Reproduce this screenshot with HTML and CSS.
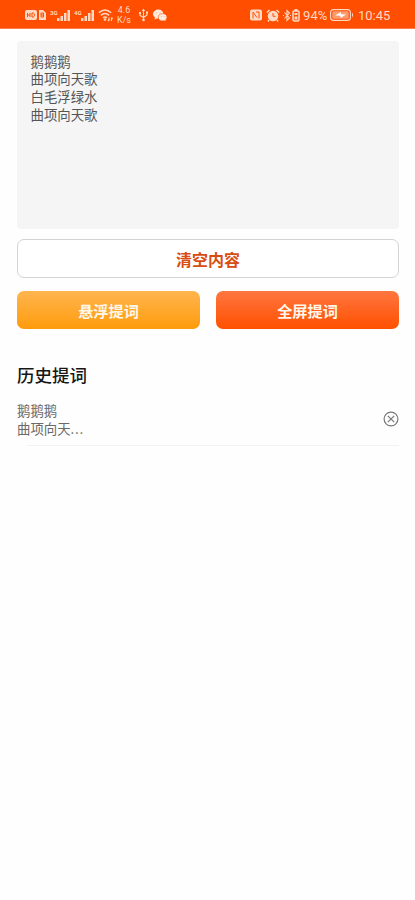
FILE: index.html
```html
<!DOCTYPE html>
<html lang="zh-CN">
<head>
<meta charset="utf-8">
<meta name="viewport" content="width=device-width, initial-scale=1">
<title>提词</title>
<link rel="stylesheet" href="styles.css">
</head>
<body>
<header class="status">
  <div class="status-left">
    <svg class="icon sim" width="21" height="12" viewBox="0 0 21 12"><rect y="1" width="12" height="10" rx="2" fill="currentColor"/><path class="cut" d="M2.500 4v4M5 4v4M2.500 6H5M7 4v4h1c2 0 2-4 0-4z"/><path d="M14 1h4l3 3v7h-7z" fill="currentColor"/><path class="cut" d="M16 4h2.500v4H16zM16 6h2"/></svg>
    <span class="network">3G</span>
    <svg class="icon" width="14" height="13" viewBox="0 0 14 13"><path d="M0 9h2.500v3H0zM3.500 7H6v5H3.500zM7 4h2.500v8H7zM10.500 1H13v11h-2.500z" fill="currentColor"/></svg>
    <span class="network second">4G</span>
    <svg class="icon" width="14" height="13" viewBox="0 0 14 13"><path d="M0 9h2.500v3H0zM3.500 7H6v5H3.500zM7 4h2.500v8H7zM10.500 1H13v11h-2.500z" fill="currentColor"/></svg>
    <svg class="icon wifi" width="15" height="14" viewBox="0 0 15 14"><path class="line" d="M.8 4.800q6.200-5.500 12.400 0M2.800 7.300q4.200-3.500 8.400 0M5 9.700q2-1.500 4 0"/><circle cx="7" cy="11.500" r="1.300" fill="currentColor"/><path class="line thin" d="M11 9.500V13M9.800 11.800 11 13M13.500 13V9.500M14.700 10.700 13.500 9.500"/></svg>
    <span class="speed"><span>4.6</span><span>K/s</span></span>
    <svg class="icon usb" width="9" height="14" viewBox="0 0 9 14"><path class="line thin" d="M4.500 2v10M1 5v2.500l3.500 2L8 7V5"/><path d="M2.800 3 4.500.5 6.200 3zM0 4h2v2H0zM7 3.500h2v2H7z" fill="currentColor"/><circle cx="4.500" cy="12" r="1.300" fill="currentColor"/></svg>
    <svg class="icon wechat" width="14" height="13" viewBox="0 0 14 13"><ellipse cx="5.300" cy="5" rx="5.300" ry="4.400" fill="currentColor"/><path d="m2 8-.5 2.500L5 9zM11 11l2 1-.5-2.500z" fill="currentColor"/><ellipse class="bubble" cx="9.600" cy="8.300" rx="4.300" ry="3.600"/><path class="eyes" d="M3 3.800h1M6.500 3.800h1M8 7.500h.8M10.800 7.500h.8"/></svg>
  </div>
  <div class="status-right">
    <svg class="icon" width="12" height="12" viewBox="0 0 12 12"><rect y=".5" width="12" height="11" rx="2" fill="currentColor"/><path class="cut" d="M3 9.500V3.200L7 8.500M6 3h3v6.500"/></svg>
    <svg class="icon alarm" width="14" height="13" viewBox="0 0 14 13"><circle cx="7" cy="7" r="5.300" fill="currentColor"/><path class="line" d="M.8 3.500 3.500 1M10.500 1l2.700 2.500M3 11l-1 1.500M11 11l1 1.500"/><path class="cut" d="M7 4v3.300h2.500"/></svg>
    <svg class="icon bluetooth" width="8" height="13" viewBox="0 0 8 13"><path class="line thin" d="M1.500 3.500 6.500 9 4 11.500v-10L6.500 4l-5 5.500"/><path d="M0 6h1v1H0zM7 6h1v1H7z" fill="currentColor"/></svg>
    <svg class="icon device" width="8" height="13" viewBox="0 0 8 13"><rect class="line" x="1" y="2" width="6" height="10" rx="1.200"/><path d="M2.500 0h3v2h-3zM2.500 4h3v2h-3zM2.500 7.500h3v3h-3z" fill="currentColor"/></svg>
    <span class="percent">94%</span>
    <svg class="icon battery" width="24" height="12" viewBox="0 0 24 12"><rect class="line thin" x=".6" y=".6" width="19.800" height="10.800" rx="3"/><rect x="2.300" y="2.300" width="16.400" height="7.400" rx="1.500" fill="currentColor" opacity=".55"/><path d="M5 6.500 11 3v2.300l5 .2L10.500 9V6.800z" fill="#fff"/><path d="M22 3.500q2 2.500 0 5z" fill="currentColor"/></svg>
    <time class="clock">10:45</time>
  </div>
</header>
<main class="page">
  <div class="editor">鹅鹅鹅<br>曲项向天歌<br>白毛浮绿水<br>曲项向天歌</div>
  <button class="button clear">清空内容</button>
  <div class="actions">
    <button class="button floating">悬浮提词</button>
    <button class="button fullscreen">全屏提词</button>
  </div>
  <h2 class="title">历史提词</h2>
  <div class="history">
    <p class="excerpt">鹅鹅鹅<br>曲项向天<span class="dots">...</span></p>
    <svg class="remove" width="16" height="16" viewBox="0 0 16 16"><circle cx="8" cy="8" r="6.900"/><path d="m4.800 4.800 6.400 6.400M11.200 4.800l-6.400 6.400"/></svg>
  </div>
</main>
</body>
</html>
```
FILE: styles.css
```css
* { box-sizing: border-box; }
body {
  margin: 0;
  min-height: 900px;
  background: #fefefe;
  color: #555;
  font-family: "Noto Sans CJK SC", sans-serif;
}
.status {
  display: flex;
  justify-content: space-between;
  height: 29px;
  padding: 2px 25px 0;
  background: #ff4e00;
  border-bottom: 1px solid #ff7d48;
  color: #ffd9c4;
  font-family: Roboto, sans-serif;
}
.status-left, .status-right { display: flex; align-items: center; }
.icon { flex: none; display: block; }
.line { fill: none; stroke: currentColor; stroke-width: 1.5; }
.thin { stroke-width: 1.1; }
.cut { fill: none; stroke: #ff4e00; stroke-width: 1; }
.eyes { fill: none; stroke: #ff9c70; stroke-width: .8; }
.bubble { fill: currentColor; stroke: #ff4e00; stroke-width: .6; }
.network { width: 7px; margin-left: 4px; padding-bottom: 6px; font-size: 6px; line-height: 7px; font-weight: 700; }
.second { margin-left: 3px; }
.wifi { margin-left: 3px; }
.speed { display: flex; flex-direction: column; width: 14px; margin-left: 4px; font-size: 9px; line-height: 10px; text-align: center; }
.usb { margin-left: 8px; }
.wechat { margin-left: 5px; color: #ffeadf; }
.alarm { margin-left: 4px; }
.bluetooth { margin-left: 3px; }
.device { margin-left: 1px; }
.percent { width: 26px; margin-left: 3px; font-size: 13px; letter-spacing: .1px; white-space: nowrap; }
.battery { margin-left: 1px; }
.clock { width: 32px; margin-left: 4px; font-size: 13px; white-space: nowrap; }
.page { padding: 12px 16px 0 17px; }
.editor {
  height: 188px;
  padding: 11.5px 13.5px;
  border-radius: 4px;
  background: #f5f5f5;
  font-size: 13.4px;
  line-height: 17.7px;
}
.button {
  display: block;
  width: 100%;
  height: 38px;
  padding: 0;
  border: 0;
  border-radius: 7px;
  color: #fff7e8;
  font: 700 15.2px/36px "Noto Sans CJK SC", sans-serif;
}
.clear { height: 39px; margin-top: 10px; border: 1px solid #d3d3d3; background: #fff; color: #d84d12; font-size: 16px; }
.actions { display: grid; grid-template-columns: 1fr 1fr; gap: 16px; margin-top: 13px; }
.floating { background: linear-gradient(#ffb54f, #ff9b0c); }
.fullscreen { background: linear-gradient(#ff7640, #ff5000); }
.title { margin: 33px 0 0; color: #161616; font-size: 17.5px; line-height: 26px; font-weight: 500; }
.history {
  display: flex;
  align-items: center;
  justify-content: space-between;
  height: 58px;
  background: linear-gradient(#f2f2f2, #f2f2f2) 10px 100% / 100% 1px no-repeat;
}
.excerpt { margin: 5px 0 0; font-size: 13.4px; line-height: 17.7px; color: #696969; }
.dots { letter-spacing: .8px; }
.remove { margin-top: 3px; fill: none; stroke: #777; stroke-width: 1.2; }
```
